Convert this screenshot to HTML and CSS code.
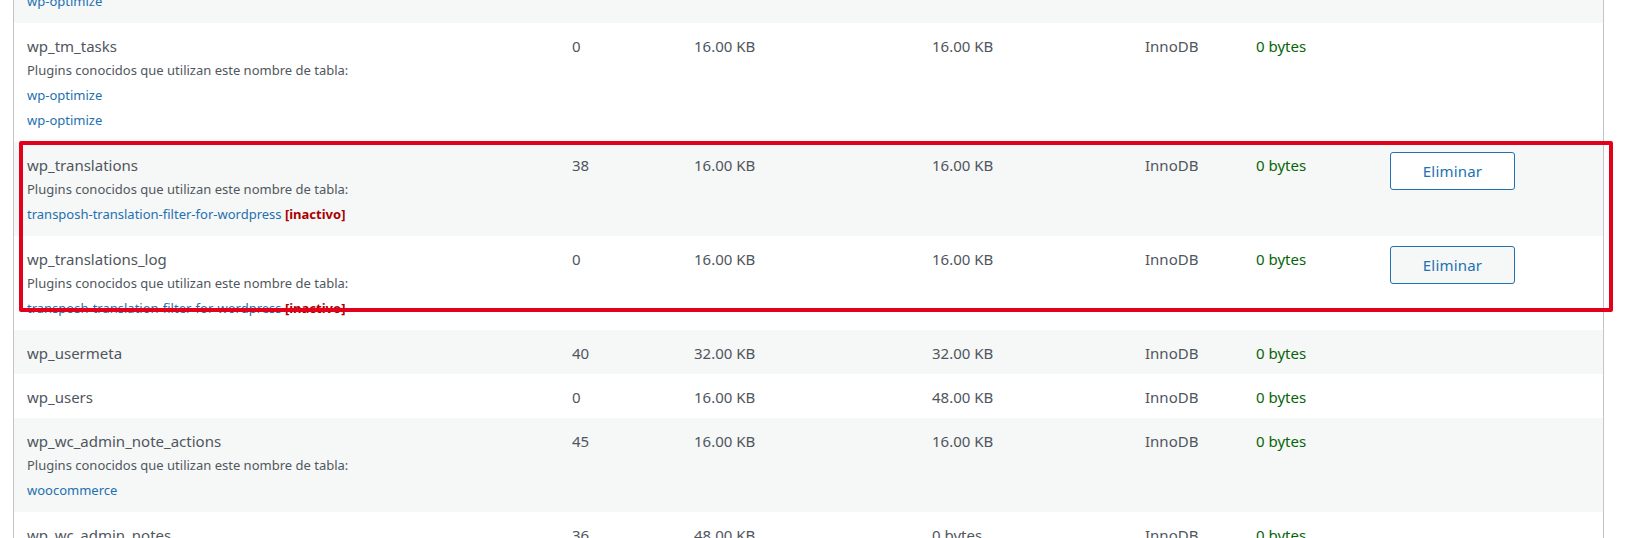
FILE: index.html
```html
<!DOCTYPE html>
<html lang="es">
<head>
<meta charset="utf-8">
<title>Tablas de la base de datos</title>
<link rel="stylesheet" href="styles.css">
</head>
<body>
<div class="wrap">
  <table class="dbtable">
    <colgroup>
      <col class="c-name"><col class="c-rec"><col class="c-data"><col class="c-idx"><col class="c-type"><col class="c-over"><col class="c-act">
    </colgroup>
    <tbody>
      <tr class="alt">
        <td><div class="tname">wp_tm_taskmeta</div><div class="note">Plugins conocidos que utilizan este nombre de tabla:</div><a class="plugin" href="#">wp-optimize</a><a class="plugin" href="#">wp-optimize</a></td>
        <td>0</td><td>16.00 KB</td><td>16.00 KB</td><td>InnoDB</td><td class="ok">0 bytes</td><td></td>
      </tr>
      <tr>
        <td><div class="tname">wp_tm_tasks</div><div class="note">Plugins conocidos que utilizan este nombre de tabla:</div><a class="plugin" href="#">wp-optimize</a><a class="plugin" href="#">wp-optimize</a></td>
        <td>0</td><td>16.00 KB</td><td>16.00 KB</td><td>InnoDB</td><td class="ok">0 bytes</td><td></td>
      </tr>
      <tr class="alt">
        <td><div class="tname">wp_translations</div><div class="note">Plugins conocidos que utilizan este nombre de tabla:</div><div class="plugin"><a href="#">transposh-translation-filter-for-wordpress</a> <span class="inactive">[inactivo]</span></div></td>
        <td>38</td><td>16.00 KB</td><td>16.00 KB</td><td>InnoDB</td><td class="ok">0 bytes</td><td class="act"><button class="btn btn-light" type="button">Eliminar</button></td>
      </tr>
      <tr>
        <td><div class="tname">wp_translations_log</div><div class="note">Plugins conocidos que utilizan este nombre de tabla:</div><div class="plugin"><a href="#">transposh-translation-filter-for-wordpress</a> <span class="inactive">[inactivo]</span></div></td>
        <td>0</td><td>16.00 KB</td><td>16.00 KB</td><td>InnoDB</td><td class="ok">0 bytes</td><td class="act"><button class="btn" type="button">Eliminar</button></td>
      </tr>
      <tr class="alt">
        <td><div class="tname">wp_usermeta</div></td>
        <td>40</td><td>32.00 KB</td><td>32.00 KB</td><td>InnoDB</td><td class="ok">0 bytes</td><td></td>
      </tr>
      <tr>
        <td><div class="tname">wp_users</div></td>
        <td>0</td><td>16.00 KB</td><td>48.00 KB</td><td>InnoDB</td><td class="ok">0 bytes</td><td></td>
      </tr>
      <tr class="alt">
        <td><div class="tname">wp_wc_admin_note_actions</div><div class="note">Plugins conocidos que utilizan este nombre de tabla:</div><a class="plugin" href="#">woocommerce</a></td>
        <td>45</td><td>16.00 KB</td><td>16.00 KB</td><td>InnoDB</td><td class="ok">0 bytes</td><td></td>
      </tr>
      <tr>
        <td><div class="tname">wp_wc_admin_notes</div><div class="note">Plugins conocidos que utilizan este nombre de tabla:</div><a class="plugin" href="#">woocommerce</a></td>
        <td>36</td><td>48.00 KB</td><td>0 bytes</td><td>InnoDB</td><td class="ok">0 bytes</td><td></td>
      </tr>
    </tbody>
  </table>
  <div class="highlight" aria-hidden="true"></div>
</div>
</body>
</html>
```
FILE: styles.css
```css
html, body {
  margin: 0;
  padding: 0;
  background: #fff;
  overflow: hidden;
}
body {
  font-family: "Noto Sans", "Open Sans", sans-serif;
  color: #50575e;
}
.wrap {
  position: relative;
  height: 538px;
  overflow: hidden;
}
.dbtable {
  margin: -96px 0 0 13px;
  width: 1591px;
  table-layout: fixed;
  border-collapse: separate;
  border-spacing: 0;
  border-left: 1px solid #c3c4c7;
  border-right: 1px solid #c3c4c7;
  background: #fff;
}
.c-name { width: 545px; }
.c-rec { width: 122px; }
.c-data { width: 238px; }
.c-idx { width: 213px; }
.c-type { width: 111px; }
.c-over { width: 134px; }
.c-act { width: 226px; }

.dbtable td {
  vertical-align: top;
  padding: 11px 10px 9px 13px;
  font-size: 15px;
  line-height: 24px;
  color: #4f565d;
}
.dbtable tr.alt td { background: #f6f7f7; }
.dbtable td.ok { color: #086508; }
.dbtable td.act { padding-top: 10px; padding-bottom: 0; }

.tname { font-size: 15px; line-height: 24px; }
.note {
  font-size: 13px;
  line-height: 25px;
  color: #50575e;
}
.plugin {
  display: block;
  font-size: 13px;
  line-height: 25px;
  color: #2271b1;
  text-decoration: none;
}
.plugin a { color: #2271b1; text-decoration: none; }
.inactive { color: #a00; font-weight: 700; }

.btn {
  display: block;
  width: 125px;
  height: 38px;
  padding: 0;
  font-family: "Noto Sans", "Open Sans", sans-serif;
  font-size: 15px;
  line-height: 36px;
  letter-spacing: 0.2px;
  color: #2271b1;
  background: #f6f7f7;
  border: 1px solid #2271b1;
  border-radius: 3px;
  cursor: pointer;
}
.btn-light { background: #fff; }

.highlight {
  position: absolute;
  left: 19px;
  top: 141px;
  width: 1586px;
  height: 163px;
  border: 4px solid #e2001a;
  border-radius: 2px;
  pointer-events: none;
}
```
